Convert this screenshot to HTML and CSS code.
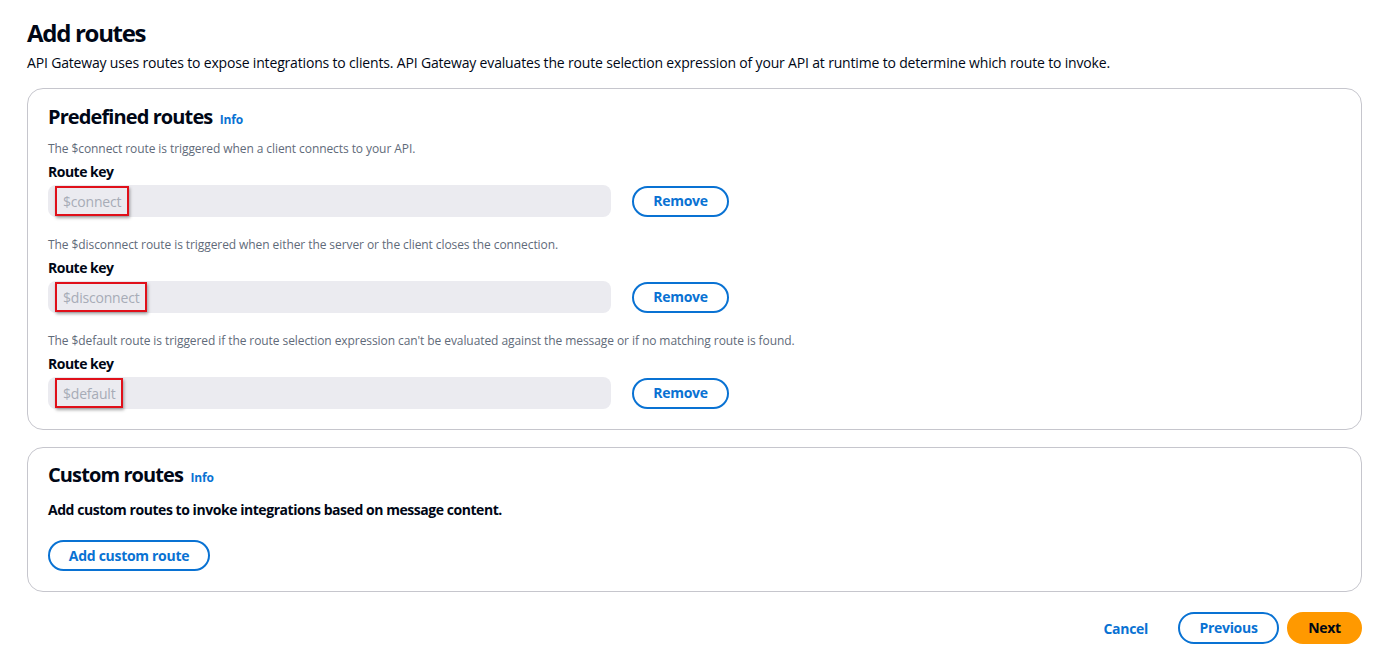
FILE: index.html
```html
<!DOCTYPE html>
<html>
<head>
<meta charset="utf-8">
<link rel="stylesheet" href="styles.css">
</head>
<body>
<div class="page">
  <header class="page-header">
    <h1 class="title">Add routes</h1>
    <p class="lead">API Gateway uses routes to expose integrations to clients. API Gateway evaluates the route selection expression of your API at runtime to determine which route to invoke.</p>
  </header>

  <section class="panel">
    <h2 class="panel-title">Predefined routes <a class="info">Info</a></h2>
    <div class="route">
      <p class="hint">The $connect route is triggered when a client connects to your API.</p>
      <label class="label">Route key</label>
      <div class="row">
        <div class="input"><span class="mark">$connect</span></div>
        <button class="btn">Remove</button>
      </div>
    </div>
    <div class="route">
      <p class="hint">The $disconnect route is triggered when either the server or the client closes the connection.</p>
      <label class="label">Route key</label>
      <div class="row">
        <div class="input"><span class="mark">$disconnect</span></div>
        <button class="btn">Remove</button>
      </div>
    </div>
    <div class="route">
      <p class="hint">The $default route is triggered if the route selection expression can't be evaluated against the message or if no matching route is found.</p>
      <label class="label">Route key</label>
      <div class="row">
        <div class="input"><span class="mark">$default</span></div>
        <button class="btn">Remove</button>
      </div>
    </div>
  </section>

  <section class="panel panel-custom">
    <h2 class="panel-title">Custom routes <a class="info">Info</a></h2>
    <p class="strong-text">Add custom routes to invoke integrations based on message content.</p>
    <button class="btn btn-add">Add custom route</button>
  </section>

  <footer class="actions">
    <a class="link-btn">Cancel</a>
    <button class="btn btn-prev">Previous</button>
    <button class="btn btn-next">Next</button>
  </footer>
</div>
</body>
</html>
```

FILE: styles.css
```css
* { box-sizing: border-box; }
html, body { margin: 0; padding: 0; background: #ffffff; }
body {
  font-family: "Open Sans", "Noto Sans", Arial, sans-serif;
  color: #000716;
  font-size: 14px;
}
.page {
  padding: 18px 31px 0 27px;
}
.title {
  margin: 0;
  font-size: 24px;
  line-height: 30px;
  font-weight: 700;
  letter-spacing: -1.3px;
}
.lead {
  margin: 5px 0 0 0;
  font-size: 14px;
  line-height: 20px;
  color: #000716;
  letter-spacing: -0.17px;
}
.panel {
  margin-top: 15px;
  border: 1px solid #c6c6cd;
  border-radius: 16px;
  padding: 15px 20px 20px 20px;
}
.panel-title {
  margin: 0;
  font-size: 20px;
  line-height: 26px;
  font-weight: 700;
  letter-spacing: -0.9px;
}
.info {
  font-size: 12px;
  font-weight: 700;
  color: #0972d3;
  margin-left: 3px;
  letter-spacing: -0.1px;
}
.route { margin-top: 8px; }
.route + .route { margin-top: 20px; }
.hint {
  margin: 0;
  font-size: 12px;
  line-height: 16px;
  color: #5f6b7a;
  letter-spacing: -0.08px;
}
.label {
  display: block;
  margin-top: 4px;
  font-size: 14px;
  line-height: 22px;
  font-weight: 700;
  letter-spacing: -0.5px;
}
.row {
  display: flex;
  align-items: center;
  gap: 21px;
  margin-top: 2px;
}
.input {
  width: 563px;
  height: 32px;
  background: #ebebf0;
  border-radius: 8px;
  display: flex;
  align-items: center;
  padding-left: 7px;
}
.mark {
  display: inline-flex;
  align-items: center;
  height: 30px;
  padding: 0 6px;
  border: 2px solid #e0101a;
  box-shadow: 1px 2px 3px rgba(0,0,0,0.35);
  color: #a7acb7;
  font-size: 14px;
  letter-spacing: -0.2px;
}
.btn {
  font-family: inherit;
  font-size: 14px;
  font-weight: 700;
  color: #0972d3;
  background: #fff;
  border: 2px solid #0972d3;
  border-radius: 20px;
  height: 31px;
  padding: 0 20px;
  cursor: pointer;
  line-height: 1;
  letter-spacing: -0.3px;
}
.row .btn { width: 97px; padding: 0; }
.panel-custom {
  margin-top: 17px;
  padding-top: 14px;
  padding-bottom: 20px;
}
.strong-text {
  margin: 9px 0 0 0;
  font-weight: 700;
  font-size: 14px;
  line-height: 20px;
  letter-spacing: -0.45px;
}
.btn-add {
  margin-top: 20px;
  width: 162px;
  padding: 0;
}
.actions {
  display: flex;
  justify-content: flex-end;
  align-items: center;
  margin-top: 20px;
}
.link-btn {
  font-size: 14px;
  font-weight: 700;
  color: #0972d3;
  margin-right: 30px;
  letter-spacing: -0.3px;
}
.btn-prev { width: 101px; padding: 0; height: 32px; }
.btn-next {
  margin-left: 8px;
  width: 75px;
  padding: 0;
  height: 32px;
  background: #ff9900;
  border-color: #ff9900;
  color: #000716;
}
```
